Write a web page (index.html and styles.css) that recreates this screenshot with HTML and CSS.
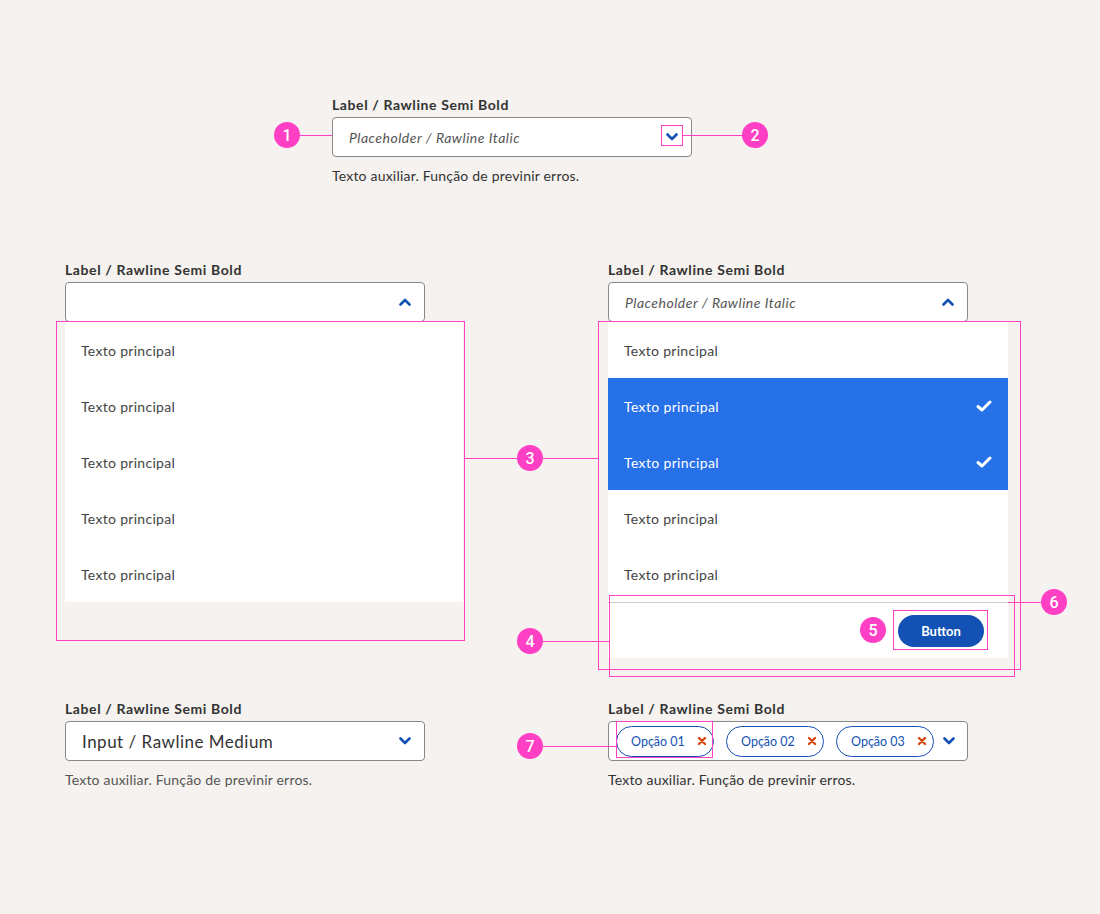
FILE: index.html
```html
<!DOCTYPE html>
<html lang="pt">
<head>
<meta charset="utf-8">
<title>Select</title>
<link rel="stylesheet" href="styles.css">
</head>
<body>
<div class="page">
  <section class="top">
    <div class="field">
      <div class="label">Label / Rawline Semi Bold</div>
      <div class="box">
        <span class="placeholder">Placeholder / Rawline Italic</span>
        <svg class="chev" viewBox="0 0 12 8" width="12" height="8"><path d="M1.5 1.5 L6 6 L10.5 1.5"/></svg>
      </div>
      <div class="helper">Texto auxiliar. Função de previnir erros.</div>
    </div>
  </section>

  <section class="grid">
    <div class="col">
      <div class="label">Label / Rawline Semi Bold</div>
      <div class="box">
        <span></span>
        <svg class="chev" viewBox="0 0 12 8" width="12" height="8"><path d="M1.5 6.5 L6 2 L10.5 6.5"/></svg>
      </div>
      <ul class="list">
        <li class="item">Texto principal</li>
        <li class="item">Texto principal</li>
        <li class="item">Texto principal</li>
        <li class="item">Texto principal</li>
        <li class="item">Texto principal</li>
      </ul>
    </div>

    <div class="col">
      <div class="label">Label / Rawline Semi Bold</div>
      <div class="box">
        <span class="placeholder">Placeholder / Rawline Italic</span>
        <svg class="chev" viewBox="0 0 12 8" width="12" height="8"><path d="M1.5 6.5 L6 2 L10.5 6.5"/></svg>
      </div>
      <ul class="list">
        <li class="item">Texto principal</li>
        <li class="item selected">Texto principal<svg class="check" viewBox="0 0 16 12" width="16" height="12"><path d="M2 6.5 L6 10 L14 2"/></svg></li>
        <li class="item selected">Texto principal<svg class="check" viewBox="0 0 16 12" width="16" height="12"><path d="M2 6.5 L6 10 L14 2"/></svg></li>
        <li class="item">Texto principal</li>
        <li class="item">Texto principal</li>
        <li class="footer"><button class="btn">Button</button></li>
      </ul>
    </div>

    <div class="col">
      <div class="label">Label / Rawline Semi Bold</div>
      <div class="box">
        <span class="value">Input / Rawline Medium</span>
        <svg class="chev" viewBox="0 0 12 8" width="12" height="8"><path d="M1.5 1.5 L6 6 L10.5 1.5"/></svg>
      </div>
      <div class="helper light">Texto auxiliar. Função de previnir erros.</div>
    </div>

    <div class="col">
      <div class="label">Label / Rawline Semi Bold</div>
      <div class="box chips-box">
        <div class="chips">
          <span class="chip">Opção 01<svg class="x" viewBox="0 0 10 10" width="10" height="10"><path d="M2 2 L8 8 M8 2 L2 8"/></svg></span>
          <span class="chip">Opção 02<svg class="x" viewBox="0 0 10 10" width="10" height="10"><path d="M2 2 L8 8 M8 2 L2 8"/></svg></span>
          <span class="chip">Opção 03<svg class="x" viewBox="0 0 10 10" width="10" height="10"><path d="M2 2 L8 8 M8 2 L2 8"/></svg></span>
        </div>
        <svg class="chev" viewBox="0 0 12 8" width="12" height="8"><path d="M1.5 1.5 L6 6 L10.5 1.5"/></svg>
      </div>
      <div class="helper">Texto auxiliar. Função de previnir erros.</div>
    </div>
  </section>

  <div class="ann">
    <div class="hl a-l1"></div>
    <div class="badge a-b1">1</div>
    <div class="ob a-o2"></div>
    <div class="hl a-l2"></div>
    <div class="badge a-b2">2</div>
    <div class="ob a-o3l"></div>
    <div class="hl a-l3l"></div>
    <div class="badge a-b3">3</div>
    <div class="hl a-l3r"></div>
    <div class="ob a-o3r"></div>
    <div class="ob a-o4"></div>
    <div class="hl a-l4"></div>
    <div class="badge a-b4">4</div>
    <div class="ob a-o5"></div>
    <div class="badge a-b5">5</div>
    <div class="hl a-l6"></div>
    <div class="badge a-b6">6</div>
    <div class="ob a-o7"></div>
    <div class="hl a-l7"></div>
    <div class="badge a-b7">7</div>
  </div>
</div>
</body>
</html>
```

FILE: styles.css
```css
* { box-sizing: border-box; }
html, body { margin: 0; padding: 0; }
body {
  background: #f5f2ef;
  font-family: "Lato", "Open Sans", sans-serif;
  color: #333;
  width: 1100px;
  height: 914px;
  overflow: hidden;
}
.page {
  position: relative;
  width: 1100px;
  height: 914px;
  padding-top: 95px;
}
.top { padding-left: 332px; }
.field { width: 360px; }
.label {
  font-size: 14px;
  line-height: 20px;
  font-weight: 700;
  letter-spacing: 0.6px;
  color: #333;
  margin-bottom: 2px;
}
.box {
  width: 360px;
  height: 40px;
  background: #fff;
  border: 1px solid #888;
  border-radius: 4px;
  display: flex;
  align-items: center;
  justify-content: space-between;
  padding: 0 13px 0 16px;
}
.placeholder {
  font-style: italic;
  font-size: 14px;
  font-weight: 400;
  letter-spacing: 0.5px;
  color: #555;
}
.value {
  font-size: 17px;
  letter-spacing: 0.5px;
  color: #333;
}
.chev { display: block; }
.chev path {
  fill: none;
  stroke: #1351b4;
  stroke-width: 2.6;
  stroke-linecap: round;
  stroke-linejoin: round;
}
.helper {
  margin-top: 9px;
  font-size: 14px;
  line-height: 20px;
  letter-spacing: 0.2px;
  color: #333;
}
.helper.light { color: #555; font-weight: 400; letter-spacing: 0.2px; }

.grid {
  margin-top: 74px;
  padding-left: 65px;
  display: grid;
  grid-template-columns: 400px 400px;
  column-gap: 143px;
  row-gap: 41px;
  align-items: start;
}
.list {
  list-style: none;
  margin: 0;
  padding: 0;
  width: 398px;
  background: #fff;
}
.col:nth-child(2) .list { width: 400px; }
.item {
  height: 56px;
  display: flex;
  align-items: center;
  justify-content: space-between;
  padding: 0 16px;
  font-size: 14px;
  font-weight: 400;
  letter-spacing: 0.3px;
  color: #444;
}
.item.selected {
  background: #2670e8;
  color: #fff;
  font-weight: 400;
  letter-spacing: 0.35px;
}
.check path {
  fill: none;
  stroke: #fff;
  stroke-width: 3;
  stroke-linecap: round;
  stroke-linejoin: round;
}
.footer {
  height: 56px;
  border-top: 1px solid #ccc;
  display: flex;
  align-items: center;
  justify-content: flex-end;
  padding-right: 24px;
}
.btn {
  width: 86px;
  height: 32px;
  border: none;
  border-radius: 16px;
  background: #1351b4;
  color: #fff;
  font-family: "Lato", sans-serif;
  font-weight: 700;
  font-size: 13px;
}
.chips-box { padding-left: 7px; padding-right: 12px; }
.chips { display: flex; gap: 12px; }
.chip {
  height: 31px;
  width: 98px;
  border: 1px solid #1351b4;
  border-radius: 16px;
  display: flex;
  align-items: center;
  justify-content: space-between;
  padding: 0 6px 0 14px;
  font-size: 12.5px;
  color: #1351b4;
}
.x path {
  fill: none;
  stroke: #d9470f;
  stroke-width: 2.4;
  stroke-linecap: round;
}

/* annotations overlay */
.ann { position: absolute; inset: 0; pointer-events: none; }
.hl { position: absolute; height: 1px; background: #ff3fc4; }
.ob { position: absolute; border: 1px solid #ff3fc4; }
.badge {
  position: absolute;
  width: 26px;
  height: 26px;
  border-radius: 50%;
  background: #ff3fc4;
  color: #fff;
  font-family: "Roboto", sans-serif;
  font-size: 16px;
  font-weight: 500;
  display: flex;
  align-items: center;
  justify-content: center;
}
.a-l1 { left: 300px; top: 135px; width: 32px; }
.a-b1 { left: 274px; top: 122px; }
.a-o2 { left: 661px; top: 125px; width: 22px; height: 21px; }
.a-l2 { left: 683px; top: 135px; width: 60px; }
.a-b2 { left: 742px; top: 122px; }
.a-o3l { left: 56px; top: 321px; width: 409px; height: 320px; }
.a-l3l { left: 465px; top: 458px; width: 52px; }
.a-b3 { left: 517px; top: 445px; }
.a-l3r { left: 543px; top: 458px; width: 55px; }
.a-o3r { left: 598px; top: 321px; width: 423px; height: 349px; }
.a-o4 { left: 609px; top: 595px; width: 406px; height: 82px; }
.a-l4 { left: 543px; top: 641px; width: 66px; }
.a-b4 { left: 517px; top: 628px; }
.a-o5 { left: 893px; top: 610px; width: 95px; height: 40px; }
.a-b5 { left: 860px; top: 617px; }
.a-l6 { left: 1008px; top: 602px; width: 34px; }
.a-b6 { left: 1041px; top: 589px; }
.a-o7 { left: 616px; top: 721px; width: 97px; height: 37px; }
.a-l7 { left: 543px; top: 746px; width: 73px; }
.a-b7 { left: 517px; top: 733px; }
```
